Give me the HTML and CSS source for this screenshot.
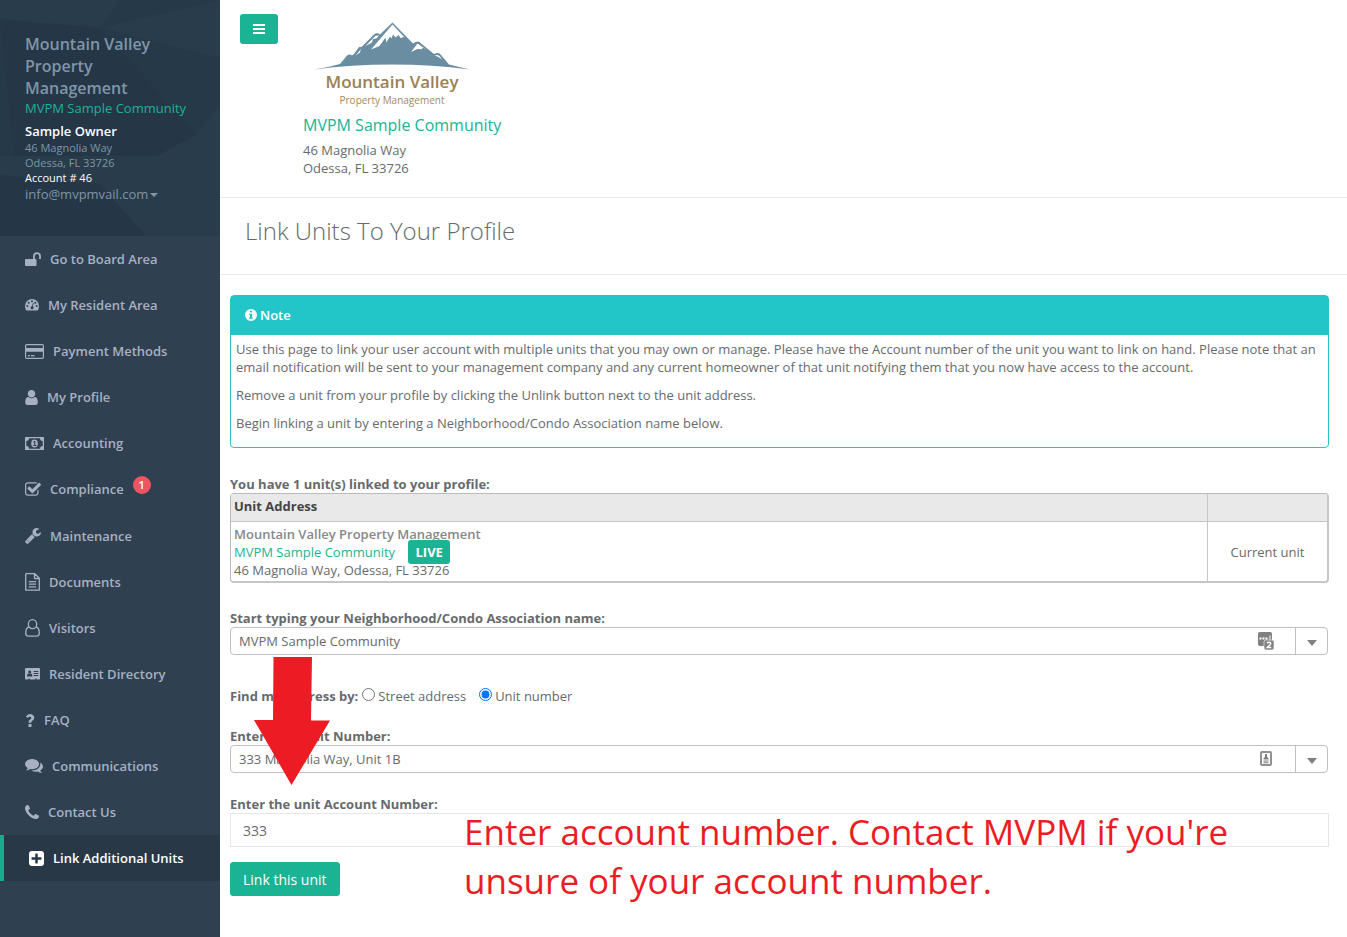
FILE: index.html
```html
<!DOCTYPE html>
<html lang="en">
<head>
    <meta charset="UTF-8">
    <meta name="viewport" content="width=device-width, initial-scale=1.0">
    <title>Link Units To Your Profile</title>
    <link rel="stylesheet" href="styles.css">
</head>
<body>
    <div class="wrapper">
        <nav class="sidebar">
            <div class="nav-header">
                <svg class="nav-pattern" viewBox="0 0 220 236" preserveAspectRatio="none" aria-hidden="true">
                    <path fill="#fff" opacity=".015" d="M0 0h120L100 28 0 19zM100 28L220 0v58z"/>
                    <path fill="#000" opacity=".025" d="M0 19l100 9 97 106-40 22H14z"/>
                    <path fill="#fff" opacity=".015" d="M197 134l23-30v52h-63z"/>
                    <path fill="#fff" opacity=".015" d="M0 156h220v80h-74l-46-52-100-9z"/>
                    <path fill="#000" opacity=".02" d="M0 175l100 9 46 52H0z"/>
                </svg>
                <div class="profile">
                    <div class="company">Mountain Valley Property Management</div>
                    <a class="community" href="#">MVPM Sample Community</a>
                    <div class="owner">Sample Owner</div>
                    <div class="small">46 Magnolia Way</div>
                    <div class="small">Odessa, FL 33726</div>
                    <div class="small account">Account # 46</div>
                    <a class="email" href="#">info@mvpmvail.com<span class="caret"></span></a>
                </div>
            </div>
            <ul class="side-menu">
                <li><a href="#">
                    <svg width="16" height="14" viewBox="0 0 16 14"><rect y="7" width="11.500" height="7" rx="1"/><path class="line" stroke-width="1.800" d="M9 7V4.200a3 3 0 0 1 6 0V7"/></svg>
                    Go to Board Area</a></li>
                <li><a href="#">
                    <svg width="14" height="12" viewBox="0 0 14 12"><path d="M7 0a7 7 0 0 1 7 7q0 2.200-1 4-.3.500-.8.500H1.800q-.5 0-.8-.5-1-1.800-1-4a7 7 0 0 1 7-7z"/><g class="cut"><circle cx="2.300" cy="7" r="1"/><circle cx="3.700" cy="3.700" r="1"/><circle cx="7" cy="2.300" r="1"/><circle cx="10.300" cy="3.700" r="1"/><circle cx="11.700" cy="7" r="1"/><path d="M7.900 3.900l.8.200-.8 3.300a1.500 1.500 0 1 1-.8-.2z"/></g></svg>
                    My Resident Area</a></li>
                <li><a href="#">
                    <svg width="19" height="15" viewBox="0 0 19 15"><rect class="line" x=".6" y=".6" width="17.800" height="13.800" rx="1.200" stroke-width="1.200"/><path d="M1 4h17v3.700H1zM3 11h2v1.200H3zM6 11h3.500v1.200H6z"/></svg>
                    Payment Methods</a></li>
                <li><a href="#">
                    <svg width="13" height="15" viewBox="256 128 1280 1536"><path d="M1536 1399q0 109-62.500 187t-150.500 78h-854q-88 0-150.500-78t-62.500-187q0-85 8.500-160.500t31.500-152 58.500-131 94-89 134.500-34.500q131 128 313 128t313-128q76 0 134.500 34.500t94 89 58.500 131 31.500 152 8.500 160.500zm-256-887q0 159-112.500 271.500t-271.500 112.500-271.500-112.500-112.500-271.500 112.500-271.500 271.500-112.500 271.500 112.500 112.500 271.500z"/></svg>
                    My Profile</a></li>
                <li><a href="#">
                    <svg width="19" height="13" viewBox="0 0 19 13"><path fill-rule="evenodd" d="M.6 0h17.800q.6 0 .6.600v11.800q0 .6-.6.600H.6Q0 13 0 12.400V.6Q0 0 .6 0zM4 1.300A2.700 2.700 0 0 1 1.300 4v5A2.700 2.700 0 0 1 4 11.700h11A2.700 2.700 0 0 1 17.700 9V4A2.700 2.700 0 0 1 15 1.300z"/><ellipse cx="9.500" cy="6.500" rx="3.300" ry="4"/><path class="cut" d="M8 4.900l1.300-1h1v4h1v1H8.200v-1h1V5.200l-.7.400z"/></svg>
                    Accounting</a></li>
                <li class="with-badge"><a href="#">
                    <svg width="16" height="14" viewBox="64 128 1664 1408"><path d="M1472 930v318q0 119-84.500 203.500t-203.500 84.500h-832q-119 0-203.500-84.500t-84.500-203.500v-832q0-119 84.500-203.500t203.500-84.500h832q63 0 117 25 15 7 18 23 3 17-9 29l-49 49q-10 10-23 10-3 0-9-2-23-6-45-6h-832q-66 0-113 47t-47 113v832q0 66 47 113t113 47h832q66 0 113-47t47-113v-254q0-13 9-22l64-64q10-10 23-10 6 0 12 3 20 8 20 29zm231-489l-814 814q-24 24-57 24t-57-24l-430-430q-24-24-24-57t24-57l110-110q24-24 57-24t57 24l263 263 647-647q24-24 57-24t57 24l110 110q24 24 24 57t-24 57z"/></svg>
                    Compliance <span class="badge">1</span></a></li>
                <li><a href="#">
                    <svg width="16" height="16" viewBox="64 128 1664 1664"><path d="M448 1472q0-26-19-45t-45-19-45 19-19 45 19 45 45 19 45-19 19-45zm644-420l-682 682q-37 37-90 37-52 0-91-37l-106-108q-38-36-38-90 0-53 38-91l681-681q39 98 114.500 173.500t173.500 114.500zm634-435q0 39-23 106-47 134-164.500 217.500t-258.500 83.500q-185 0-316.500-131.500t-131.500-316.500 131.500-316.500 316.500-131.500q58 0 121.500 16.500t107.500 46.500q16 11 16 28t-16 28l-293 169v224l193 107q5-3 79-48.500t135.500-81 70.500-35.500q15 0 23.500 10t8.500 25z"/></svg>
                    Maintenance</a></li>
                <li><a href="#">
                    <svg width="15" height="18" viewBox="0 0 15 18"><path class="line" stroke-width="1.300" stroke-linejoin="round" d="M1.300.7H9.800l4.500 4.500v12H.7V1.300q0-.6.600-.6zM9.500.7v4.800h4.800"/><path class="line" stroke-width="1.200" d="M3.800 8.600h7.300M3.800 11.200h7.300M3.800 13.800h7.300"/></svg>
                    Documents</a></li>
                <li><a href="#">
                    <svg width="15" height="18" viewBox="0 0 15 18"><path class="line" stroke-width="1.300" d="M4.100 8C2 8.300.7 10.400.7 14q0 3.200 2.800 3.200h8q2.800 0 2.800-3.200c0-3.600-1.300-5.700-3.400-6"/><ellipse class="line" cx="7.500" cy="5.200" rx="4.200" ry="4.500" stroke-width="1.300"/></svg>
                    Visitors</a></li>
                <li><a href="#">
                    <svg width="15" height="12" viewBox="0 0 15 12"><rect width="15" height="11.600" rx="1"/><g class="cut"><circle cx="4.700" cy="3.900" r="1.500"/><path d="M2 8.500q0-2.800 1.400-2.900 1.300.9 2.600 0 1.400.1 1.400 2.900zM8.700 3h4.600v1H8.700zM8.700 5h4.600v1H8.700zM8.700 7h4.600v1H8.700zM3 10.800h2v.9H3zM10 10.800h2v.9h-2z"/></g></svg>
                    Resident Directory</a></li>
                <li><a href="#">
                    <svg width="10" height="13" viewBox="0 0 10 13"><path d="M3.500 10h3v3h-3zM3.500 8.800V8q0-1.600 1.600-2.500 1.200-.7 1.200-1.500 0-1.300-1.400-1.300-1.200 0-2.100 1.400L.9 2.600Q2.300 0 5.100 0q1.700 0 2.900 1.100 1.300 1.100 1.300 2.700 0 1.900-1.900 3-.9.500-.9 1.100v.9z"/></svg>
                    FAQ</a></li>
                <li><a href="#">
                    <svg width="18" height="14" viewBox="0 256 1792 1408"><path d="M1408 768q0 139-94 257t-256.500 186.500-353.500 68.500q-86 0-176-16-124 88-278 128-36 9-86 16h-3q-11 0-20.500-8t-11.500-21q-1-3-1-6.500t.5-6.500 2-6l2.500-5 3.500-5.500 4-5 4.500-5 4-4.500q5-6 23-25t26-29.500 22.500-29 25-38.500 20.500-44q-124-72-195-177t-71-224q0-139 94-257t256.500-186.500 353.500-68.500 353.500 68.500 256.500 186.500 94 257zm384 256q0 120-71 224.500t-195 176.500q10 24 20.500 44t25 38.500 22.500 29 26 29.500 23 25q1 1 4 4.500t4.500 5 4 5 3.500 5.500l2.500 5 2 6 .5 6.500-1 6.500q-3 14-13 22t-22 7q-50-7-86-16-154-40-278-128-90 16-176 16-271 0-472-132 58 4 88 4 161 0 309-45t264-129q125-92 192-212t67-254q0-77-23-152 129 71 204 178t75 230z"/></svg>
                    Communications</a></li>
                <li><a href="#">
                    <svg width="14" height="14" viewBox="192 128 1408 1408"><path d="M1600 1240q0 27-10 70.500t-21 68.500q-21 50-122 106-94 51-186 51-27 0-53-3.500t-57.500-12.500-47-14.500-55.500-20.500-49-18q-98-35-175-83-127-79-264-216t-216-264q-48-77-83-175-3-9-18-49t-20.500-55.500-14.500-47-12.500-57.500-3.500-53q0-92 51-186 56-101 106-122 25-11 68.500-21t70.500-10q14 0 21 3 18 6 53 76 11 19 30 54t35 63.500 31 53.500q3 4 17.500 25t21.500 35.500 7 28.500q0 20-28.500 50t-62 55-62 53-28.500 46q0 9 5 22.500t8.500 20.500 14 24 11.500 19q76 137 174 235t235 174q2 1 19 11.500t24 14 20.500 8.500 22.500 5q18 0 46-28.500t53-62 55-62 50-28.500q14 0 28.500 7t35.500 21.500 25 17.500q25 15 53.500 31t63.500 35 54 30q70 35 76 53 3 7 3 21z"/></svg>
                    Contact Us</a></li>
                <li class="active"><a href="#">
                    <svg width="15" height="15" viewBox="128 128 1536 1536"><path d="M1408 960v-128q0-26-19-45t-45-19h-320v-320q0-26-19-45t-45-19h-128q-26 0-45 19t-19 45v320h-320q-26 0-45 19t-19 45v128q0 26 19 45t45 19h320v320q0 26 19 45t45 19h128q26 0 45-19t19-45v-320h320q26 0 45-19t19-45zm256-544v960q0 119-84.500 203.500t-203.500 84.500h-960q-119 0-203.500-84.500t-84.500-203.500v-960q0-119 84.500-203.500t203.500-84.500h960q119 0 203.500 84.500t84.500 203.500z"/></svg>
                    Link Additional Units</a></li>
            </ul>
        </nav>

        <main class="page">
            <header class="top-bar">
                <button class="menu-btn" type="button" aria-label="Toggle menu">
                    <svg width="12" height="10" viewBox="0 0 12 10" aria-hidden="true"><path d="M0 0h12v2H0zM0 4h12v2H0zM0 8h12v2H0z"/></svg>
                </button>
                <div class="association">
                    <div class="logo">
                        <svg width="156" height="48" viewBox="0 0 156 48" aria-hidden="true">
                            <path fill="#6a8da1" d="M0 47.500Q14 45.500 26 42l7-8.500q3-2 5 0l2-1.500 5-7h2.500L60 12.500q3-2.500 6 0L78.500.5 99 21.500q5.500-4 8 0L120 32q5-2.500 7 1l8 9.500q10 2.500 21 5-38-5-78-5t-78 5z"/>
                            <path fill="#fff" d="M78.500 2.500L57 27.500l8.500-3.500 6-8.500.8 5 3.700-6 1.500 2 1.500-4 2.500 3 3-2.500 2 3 3.500-1 2 2zM65 13.500l-3.500.3L51.500 24l6.500-3.500 1-3.500 3.500-.5zM47.500 26.500l-6 7 4.500-3 .5-2zM103.500 21.500l-6.500 8.500 6.500-3 4.500.3 1-2.300 3.500 3zM120.500 33.500q4-1.500 5.500 1l2 3-3.500-2.500z"/>
                        </svg>
                        <div class="logo-name">Mountain Valley</div>
                        <div class="logo-sub">Property Management</div>
                    </div>
                    <a class="association-name" href="#">MVPM Sample Community</a>
                    <div>46 Magnolia Way</div>
                    <div>Odessa, FL 33726</div>
                </div>
            </header>

            <div class="page-heading">
                <h2>Link Units To Your Profile</h2>
            </div>

            <div class="content">
                <section class="panel">
                    <div class="panel-heading">
                        <svg width="12" height="12" viewBox="0 0 12 12" aria-hidden="true"><path fill-rule="evenodd" d="M6 0a6 6 0 1 1 0 12A6 6 0 0 1 6 0zM5 1.800v1.700h2V1.800zM4.200 4.700v1.200H5V8.600h-.8v1.200h3.600V8.600H7V4.700z"/></svg>
                        Note
                    </div>
                    <div class="panel-body">
                        <p>Use this page to link your user account with multiple units that you may own or manage. Please have the Account number of the unit you want to link on hand. Please note that an email notification will be sent to your management company and any current homeowner of that unit notifying them that you now have access to the account.</p>
                        <p>Remove a unit from your profile by clicking the Unlink button next to the unit address.</p>
                        <p>Begin linking a unit by entering a Neighborhood/Condo Association name below.</p>
                    </div>
                </section>

                <table class="units">
                    <caption>You have 1 unit(s) linked to your profile:</caption>
                    <thead>
                        <tr>
                            <th>Unit Address</th>
                            <td class="status"></td>
                        </tr>
                    </thead>
                    <tbody>
                        <tr>
                            <td>
                                <strong>Mountain Valley Property Management</strong><br>
                                <a href="#">MVPM Sample Community</a> <span class="live">LIVE</span><br>
                                46 Magnolia Way, Odessa, FL 33726
                            </td>
                            <td class="status">Current unit</td>
                        </tr>
                    </tbody>
                </table>

                <form class="link-form">
                    <div class="field">
                        <label for="association">Start typing your Neighborhood/Condo Association name:</label>
                        <div class="combo">
                            <input id="association" type="text" value="MVPM Sample Community">
                            <svg class="combo-icon" width="16" height="18" viewBox="0 0 16 18" aria-hidden="true"><rect width="14" height="14" rx="2"/><path fill="#fff" d="M1.500 5.500h2v2h-2zM4.500 5.500h2v2h-2zM7.500 5.500h2v2h-2zM11.500 3.500h1v4h-1z"/><rect x="6" y="8" width="10" height="10" rx="2" stroke="#fff" stroke-width=".6"/><path fill="none" stroke="#fff" stroke-width="1.500" d="M9 11q2-1.300 3.300-.4 1 1.200-.6 2.500L9.300 15.500h4"/></svg>
                            <button type="button" aria-label="Show associations"><span class="arrow"></span></button>
                        </div>
                    </div>

                    <div class="find-by">
                        <strong>Find my address by:</strong>
                        <input id="by-street" type="radio" name="find"><label for="by-street">Street address</label>
                        <input id="by-unit" type="radio" name="find" checked><label for="by-unit">Unit number</label>
                    </div>

                    <div class="field">
                        <label for="unit">Enter your Unit Number:</label>
                        <div class="combo">
                            <input id="unit" type="text" value="333 Magnolia Way, Unit 1B">
                            <svg class="combo-icon" width="16" height="16" viewBox="0 0 16 16" aria-hidden="true"><rect x="3" y="1" width="10" height="13" rx="1" fill="none" stroke="#919191" stroke-width="2"/><path d="M7 3h2v2.500l1.500 2v1h-5v-1l1.500-2zM5.500 9.500h5v1h-5zM5.500 11.200h5v1h-5z"/></svg>
                            <button type="button" aria-label="Show units"><span class="arrow"></span></button>
                        </div>
                    </div>

                    <div class="field account-field">
                        <label for="account">Enter the unit Account Number:</label>
                        <input class="form-control" id="account" type="text" value="333">
                        <svg class="pointer" width="76" height="128" viewBox="0 0 76 128" aria-hidden="true"><path d="M19.500 0H58l-1 63.500h19L37.500 128 0 63h19z"/></svg>
                        <p class="hint">Enter account number. Contact MVPM if you're<br>unsure of your account number.</p>
                    </div>

                    <button class="submit" type="submit">Link this unit</button>
                </form>
            </div>
        </main>
    </div>
</body>
</html>
```
FILE: styles.css
```css
* {
    box-sizing: border-box;
}

body {
    margin: 0;
    font-family: 'Open Sans', 'Noto Sans', sans-serif;
    font-size: 13px;
    line-height: 18px;
    color: #676a6c;
    background: #fff;
}

a {
    color: #1ab394;
    text-decoration: none;
}

input,
button {
    font-family: inherit;
    color: inherit;
}

.wrapper {
    display: flex;
    min-height: 100vh;
}

/* sidebar */
.sidebar {
    width: 220px;
    flex-shrink: 0;
    background: #2f4050;
}

.nav-header {
    position: relative;
    padding: 33px 25px;
    background: #263949;
    color: #8095a8;
}

.nav-pattern {
    position: absolute;
    top: 0;
    left: 0;
    width: 100%;
    height: 100%;
}

.profile {
    position: relative;
}

.company {
    font-size: 16px;
    font-weight: 600;
    line-height: 22px;
}

.community {
    display: block;
    white-space: nowrap;
}

.owner {
    margin-top: 5px;
    font-weight: 600;
    color: #fff;
}

.small {
    font-size: 11px;
    line-height: 15px;
}

.account {
    color: #fff;
}

.email {
    display: flex;
    align-items: center;
    gap: 2px;
    color: #8095a8;
}

.caret {
    margin-top: 2px;
    border: 4px solid transparent;
    border-top-color: #8095a8;
    border-bottom: 0;
}

.side-menu {
    margin: 0;
    padding: 0;
    list-style: none;
}

.side-menu a {
    display: flex;
    align-items: center;
    gap: 9px;
    padding: 14px 20px 14px 25px;
    font-weight: 600;
    color: #a7b1c2;
}

.side-menu svg {
    flex-shrink: 0;
    fill: currentColor;
}

.side-menu .line {
    fill: none;
    stroke: currentColor;
}

.side-menu .cut {
    fill: #2f4050;
}

.with-badge {
    padding-bottom: 1px;
}

.badge {
    width: 18px;
    height: 18px;
    margin-top: -8px;
    border-radius: 50%;
    background: #ed5565;
    color: #fff;
    font-size: 11px;
    text-align: center;
}

.side-menu .active {
    border-left: 4px solid #19aa8d;
    background: #293846;
}

.side-menu .active a {
    color: #fff;
}

/* page */
.page {
    flex: 1;
    min-width: 0;
}

.top-bar {
    display: flex;
    align-items: flex-start;
    gap: 25px;
    padding: 14px 20px 20px;
    border-bottom: 1px solid #e7eaec;
}

.menu-btn {
    display: flex;
    align-items: center;
    justify-content: center;
    width: 38px;
    height: 30px;
    padding: 0;
    border: 0;
    border-radius: 3px;
    background: #1ab394;
}

.menu-btn svg {
    fill: #fff;
}

.association {
    padding-top: 8px;
}

.logo {
    width: 178px;
    padding-bottom: 6px;
    text-align: center;
    color: #a38a5d;
}

.logo svg {
    display: block;
    margin: 0 auto;
}

.logo-name {
    font-size: 17px;
    font-weight: 600;
    line-height: 23px;
    color: #9c8052;
}

.logo-sub {
    font-size: 10px;
    line-height: 14px;
}

.association-name {
    display: block;
    margin-bottom: 4px;
    font-size: 16px;
    line-height: 24px;
}

.page-heading {
    padding: 20px 25px 30px;
    border-bottom: 1px solid #e7eaec;
}

.page-heading h2 {
    margin: 0;
    font-size: 24px;
    font-weight: 300;
    line-height: 26px;
}

.content {
    padding: 20px 18px 20px 10px;
}

.panel {
    margin-bottom: 27px;
    border: 1px solid #23c6c8;
    border-radius: 4px;
}

.panel-heading {
    display: flex;
    align-items: center;
    gap: 3px;
    padding: 10px 14px 11px;
    background: #23c6c8;
    color: #fff;
    font-weight: 600;
}

.panel-heading svg {
    fill: #fff;
}

.panel-body {
    padding: 5px;
}

.panel-body p {
    margin: 0 0 10px;
}

/* linked units */
.units {
    width: 100%;
    margin-bottom: 26px;
    border: 1px solid #bbb;
    border-right: 2px solid #c6c6c6;
    border-bottom: 2px solid #c6c6c6;
    border-radius: 4px;
    border-spacing: 0;
}

.units caption {
    font-weight: 700;
    text-align: left;
}

.units th,
.units td {
    padding: 3px 3px 2px;
    text-align: left;
}

.units thead th,
.units thead td {
    padding: 3px 3px 6px;
    border-bottom: 1px solid #c6c6c6;
    background: #e9e9e9;
    color: #444;
}

.units strong {
    font-weight: 600;
    color: #888;
}

.units .status {
    width: 120px;
    border-left: 1px solid #c6c6c6;
    text-align: center;
}

.live {
    margin-left: 10px;
    padding: 3px 7px;
    border-radius: 3px;
    background: #1ab394;
    color: #fff;
    font-weight: 700;
}

/* form */
.field label {
    display: block;
    font-weight: 700;
}

.combo {
    display: flex;
    align-items: center;
    height: 28px;
    margin-right: 1px;
    border: 1px solid #c0c0c0;
    border-radius: 4px;
}

.combo input {
    flex: 1;
    min-width: 0;
    padding: 0 8px;
    border: 0;
    outline: 0;
    background: transparent;
    font-size: 13px;
}

.combo-icon {
    margin-right: 21px;
    fill: #808080;
}

.combo button {
    display: flex;
    align-items: center;
    justify-content: center;
    align-self: stretch;
    width: 32px;
    padding: 0;
    border: 0;
    border-left: 1px solid #c0c0c0;
    background: transparent;
}

.arrow {
    margin-top: 4px;
    border: 5px solid transparent;
    border-top: 6px solid #808080;
    border-bottom: 0;
}

.find-by {
    display: flex;
    align-items: center;
    margin: 32px 0 22px;
}

.find-by input {
    margin: 0 3px 4px 4px;
}

.find-by label + input {
    margin-left: 13px;
}

.account-field {
    position: relative;
    margin: 22px 0 15px;
}

.form-control {
    display: block;
    width: 100%;
    height: 34px;
    padding: 6px 12px;
    border: 1px solid #e5e6e7;
    font-size: 14px;
}

.pointer {
    position: absolute;
    top: -138px;
    left: 24px;
    fill: #ed1c24;
}

.hint {
    position: absolute;
    top: 12px;
    left: 234px;
    margin: 0;
    font-size: 35px;
    line-height: 49px;
    white-space: nowrap;
    color: #ed1c24;
}

.submit {
    height: 34px;
    padding: 0 12px;
    border: 1px solid #1ab394;
    border-radius: 3px;
    background: #1ab394;
    color: #fff;
    font-size: 14px;
}
```
